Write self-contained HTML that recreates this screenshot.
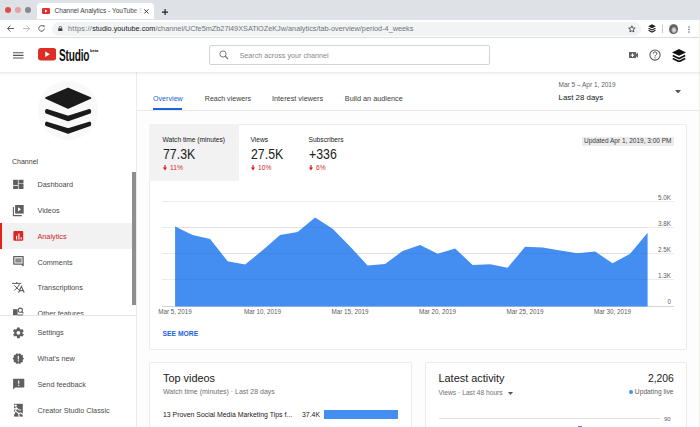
<!DOCTYPE html>
<html><head><meta charset="utf-8">
<style>
*{margin:0;padding:0;box-sizing:border-box}
html,body{width:700px;height:427px;overflow:hidden;background:#fff;font-family:"Liberation Sans",sans-serif;color:#202020}
.a{position:absolute;white-space:nowrap}
#tabbar{position:absolute;left:0;top:0;width:700px;height:19.5px;background:#dee1e6}
.dot{position:absolute;top:6.6px;width:6.2px;height:6.2px;border-radius:50%}
#tab{position:absolute;left:36.6px;top:3.3px;width:117.3px;height:16px;background:#fff;border-radius:4px 4px 0 0}
#addr{position:absolute;left:0;top:19.5px;width:700px;height:18px;background:#fff;border-bottom:1px solid #dadce0}
#omni{position:absolute;left:52px;top:22px;width:589px;height:13.5px;background:#f1f3f4;border-radius:7px}
#ythead{position:absolute;left:0;top:38px;width:700px;height:34px;background:#fff}
#side{position:absolute;left:0;top:72px;width:137px;height:355px;background:#fff;border-right:1px solid #ebebeb}
#main{position:absolute;left:137px;top:72px;width:562px;height:355px;background:#fdfdfd}
#mhead{position:absolute;left:0;top:0;width:562px;height:39px;background:#fff;border-bottom:1px solid #e8e8e8}
.card{position:absolute;background:#fff;border:1px solid #ebebeb;border-radius:2px}
.item{position:absolute;left:0;width:136px;height:26px}
.t{left:37.5px;line-height:10px;font-size:7.25px;color:#4a4a4a}
.item svg{position:absolute;left:12px;top:8px}
.m{font-size:14.5px;line-height:16px;color:#202020;transform:scaleX(.85);transform-origin:0 0}
.shadow{position:absolute;left:0;top:72px;width:700px;height:3.5px;background:linear-gradient(rgba(0,0,0,.085),rgba(0,0,0,.03) 40%,rgba(0,0,0,0));z-index:5}
</style></head><body>
<div id="tabbar">
  <div class="dot" style="left:5.3px;background:#e04a48"></div>
  <div class="dot" style="left:14.9px;background:#e6a09e"></div>
  <div class="dot" style="left:24.9px;background:#878787"></div>
  <div id="tab">
    <svg class="a" style="left:5.5px;top:5px" width="8" height="6" viewBox="0 0 8 6"><rect width="8" height="6" rx="1.3" fill="#e3302f"/><path d="M3 1.6L5.4 3 3 4.4z" fill="#fff"/></svg>
    <div class="a" style="left:18px;top:2px;font-size:6.5px;line-height:12px;color:#3c4043">Channel Analytics - YouTube S</div>
    <div class="a" style="left:96px;top:4px;width:20px;height:10px;background:linear-gradient(90deg,rgba(255,255,255,0),rgba(255,255,255,.85) 45%,#fff 55%)"></div>
    <svg class="a" style="left:107.4px;top:5.6px" width="4.8" height="4.8" viewBox="0 0 4.8 4.8"><path d="M.3.3l4.2 4.2M4.5.3L.3 4.5" stroke="#3c4043" stroke-width="1"/></svg>
  </div>
  <svg class="a" style="left:161.7px;top:8.6px" width="6.2" height="6.2" viewBox="0 0 6.2 6.2"><path d="M3.1 0v6.2M0 3.1h6.2" stroke="#202124" stroke-width="1.15"/></svg>
</div>
<div id="addr">
  <svg class="a" style="left:6px;top:4.5px" width="9" height="9" viewBox="0 0 9 9"><path d="M8 4.5H1.5M4.5 1.5l-3 3 3 3" stroke="#5f6368" stroke-width="1" fill="none"/></svg>
  <svg class="a" style="left:21.5px;top:4.5px" width="9" height="9" viewBox="0 0 9 9"><path d="M1 4.5h6.5M4.5 1.5l3 3-3 3" stroke="#bdc1c6" stroke-width="1" fill="none"/></svg>
  <svg class="a" style="left:37px;top:4.5px" width="9" height="9" viewBox="0 0 9 9"><path d="M7.3 4.5A2.8 2.8 0 1 1 6.5 2.5" stroke="#5f6368" stroke-width="1" fill="none"/><path d="M5.2 1.3h2.3v2.3z" fill="#5f6368"/></svg>
</div>
<div id="omni">
  <svg class="a" style="left:6.4px;top:4.2px" width="4.6" height="5.2" viewBox="0 0 4.6 5.2"><path d="M1.1 2.3V1.5a1.2 1.2 0 0 1 2.4 0v.8" stroke="#3c4043" stroke-width=".8" fill="none"/><rect x=".2" y="2.2" width="4.2" height="3" rx=".4" fill="#3c4043"/></svg>
  <div class="a" style="left:16px;top:0;font-size:7.3px;line-height:13.5px;color:#70757a"><span style="letter-spacing:.28px">https://</span><span style="color:#202124">studio.youtube.com</span>/channel/UCfe5mZb27l49XSATiOZeKJw/analytics/tab-overview/period-4_weeks</div>
  <svg class="a" style="left:576.2px;top:3.2px" width="7.8" height="7.8" viewBox="0 0 24 24"><path d="M12 2.5l2.8 6.6 7.2.6-5.5 4.7 1.7 7L12 17.6l-6.2 3.8 1.7-7L2 9.7l7.2-.6z" stroke="#3c4043" stroke-width="2.6" fill="none" stroke-linejoin="round"/></svg>
</div>
<svg class="a" style="left:647.5px;top:24px" width="8" height="9" viewBox="0 0 8 9"><path d="M4 .3L7.8 2.3 4 4.3 .2 2.3z" fill="#222"/><path d="M.5 4.2L4 6 7.5 4.2M.5 6.3L4 8.1 7.5 6.3" stroke="#222" stroke-width="1.1" fill="none"/></svg>
<div class="a" style="left:662px;top:25px;width:1px;height:8px;background:#c8c8c8"></div>
<div class="a" style="left:668.6px;top:24px;width:9.7px;height:9.5px;border-radius:50%;background:radial-gradient(ellipse at 55% 60%,#eee 0,#bbb 25%,#555 45%,#777 65%,#ddd 100%)"></div>
<svg class="a" style="left:688px;top:25.5px" width="2" height="7" viewBox="0 0 2 7"><circle cx="1" cy="1" r=".8" fill="#5f6368"/><circle cx="1" cy="3.5" r=".8" fill="#5f6368"/><circle cx="1" cy="6" r=".8" fill="#5f6368"/></svg>

<div id="ythead">
  <svg class="a" style="left:13.2px;top:13.5px" width="10.5" height="7" viewBox="0 0 10.5 7"><path d="M0 .8h10.5M0 3.4h10.5M0 6.05h10.5" stroke="#555" stroke-width="1.1"/></svg>
  <svg class="a" style="left:37.6px;top:10.4px" width="18.3" height="12.4" viewBox="0 0 18.5 12.5"><rect width="18.5" height="12.5" rx="3" fill="#dc2d26"/><path d="M7.3 3.5L12 6.25 7.3 9z" fill="#fff"/></svg>
  <div class="a" style="left:58.5px;top:9px;font-size:16.8px;line-height:17px;font-weight:bold;color:#111;transform:scaleX(.6);transform-origin:0 0;letter-spacing:-.3px">Studio</div>
  <div class="a" style="left:90px;top:10px;font-size:4px;line-height:5px;font-weight:bold;color:#000">beta</div>
  <div class="a" style="left:209px;top:7.2px;width:281px;height:19.5px;border:1px solid #d3d3d3;border-radius:2px;background:#fff">
    <svg class="a" style="left:9.2px;top:3.7px" width="10" height="10" viewBox="0 0 10 10"><circle cx="4" cy="4" r="3.1" stroke="#777" stroke-width="1" fill="none"/><path d="M6.2 6.2L9 9" stroke="#777" stroke-width="1.2"/></svg>
    <div class="a" style="left:29.5px;top:.8px;line-height:17.5px;font-size:7.2px;color:#888">Search across your channel</div>
  </div>
  <svg class="a" style="left:628.9px;top:13.7px" width="9.5" height="6.4" viewBox="0 0 9.5 6.4"><path d="M0 0h7.1v2.2L9.4 .3v5.8L7.1 4.2v2.2H0z" fill="#606060"/><path d="M3.5 1.4v3.6M1.7 3.2h3.6" stroke="#fff" stroke-width="1"/></svg>
  <svg class="a" style="left:648.7px;top:11px" width="12" height="12" viewBox="0 0 12 12"><circle cx="6" cy="6" r="5.1" stroke="#555" stroke-width="1.05" fill="none"/><path d="M4.3 4.7a1.75 1.75 0 1 1 2.5 1.5c-.55.3-.8.55-.8 1.3" stroke="#555" stroke-width="1" fill="none"/><circle cx="6" cy="8.8" r=".62" fill="#555"/></svg>
  <svg class="a" style="left:671.5px;top:10.5px" width="14" height="13.5" viewBox="0 0 14 13.5"><path d="M7 0L14 3.4 7 6.8 0 3.4z" fill="#111"/><path d="M.8 6.6L7 9.6 13.2 6.6M.8 9.6L7 12.6 13.2 9.6" stroke="#111" stroke-width="1.7" fill="none"/></svg>
</div>
<div class="shadow"></div>

<div id="side">
  <div class="a" style="left:38px;top:8.5px;width:59.5px;height:59.5px;border-radius:50%;background:#f8f9f8"></div>
  <svg class="a" style="left:43.5px;top:14.5px" width="48" height="50" viewBox="43.5 86.5 48 50"><g fill="#1b1b1b" stroke="#1b1b1b" stroke-width="1.6" stroke-linejoin="round"><path d="M67.6 87.9L90 97.5 67.6 107.6 45.4 97.5z"/><path d="M46.3 109.3L67.6 116 88.9 109.3Q90.4 109.5 89.6 112.2L67.6 120 45.6 112.2Q44.8 109.5 46.3 109.3z"/><path d="M46.3 121.9L67.6 128.6 88.9 121.9Q90.4 122.1 89.6 124.8L67.6 132.6 45.6 124.8Q44.8 122.1 46.3 121.9z"/></g></svg>
  <div class="a" style="left:12px;top:85px;font-size:7px;line-height:10px;color:#404040">Channel</div>
  <div class="a" style="left:0;top:151px;width:132px;height:25.5px;background:#f2f2f2"></div>
  <div class="a" style="left:0;top:151px;width:2px;height:25.5px;background:#e62117"></div>
  <div class="a t" style="top:107.7px">Dashboard</div>
  <div class="a t" style="top:134.2px">Videos</div>
  <div class="a t" style="top:159.6px;color:#cc1f1f">Analytics</div>
  <div class="a t" style="top:186.1px">Comments</div>
  <div class="a t" style="top:210.7px">Transcriptions</div>
  <div class="a" style="left:0;top:228px;width:136px;height:15px;overflow:hidden"><div class="a t" style="top:9px">Other features</div></div>
  <div class="a" style="left:0;top:243px;width:136px;height:1px;background:#e6e6e6"></div>
  <div class="a" style="left:132px;top:99.5px;width:4px;height:133.5px;background:#8e8e8e"></div>
  <div class="a t" style="top:255.7px">Settings</div>
  <div class="a t" style="top:281.7px">What's new</div>
  <div class="a t" style="top:307.7px">Send feedback</div>
  <div class="a t" style="top:333.7px">Creator Studio Classic</div>
  <svg class="a" style="left:0;top:0" width="137" height="355" viewBox="0 72 137 355">
    <g fill="#606060">
      <path d="M13.1 179.7h4.8v5.6h-4.8zM13.1 185.9h4.8v3.1h-4.8zM18.6 179.7h4.9v3.7h-4.9zM18.6 184h4.9v5h-4.9z"/>
      <path d="M15.1 205h8.6v8.6h-8.6z"/>
      <path d="M13.4 207v8.6h8.4" stroke="#606060" stroke-width="1.1" fill="none"/>
    </g>
    <path d="M18 207.2l3 2.1-3 2.1z" fill="#fff"/>
    <rect x="13.4" y="231" width="9.8" height="9.8" rx="1" fill="#dd2424"/>
    <path d="M16.6 235.8v3.6M18.9 233.4v6M21.2 237.2v2.2" stroke="#fff" stroke-width="1.1"/>
    <path d="M13.8 256.6h9.3v8.9l-1.6-1.4h-7.7z" fill="none" stroke="#606060" stroke-width="1.3" stroke-linejoin="round"/>
    <path d="M15.3 258.3h6.3v4.3h-6.3z" fill="#8a8a8a"/>
    <path d="M12.1 283.4h9.2M16.6 282v1.4M14.3 285.5l5.8 5.3M19.3 284.2c-1 2.6-2.8 4.6-5 6.2" stroke="#606060" stroke-width="1" fill="none"/>
    <path d="M18.6 292.7l2.8-6.3 2.8 6.3M19.7 290.6h3.4" stroke="#606060" stroke-width="1.1" fill="none"/>
    <path d="M13 309.2h4.6v6h-4.6z" fill="#606060"/>
    <circle cx="20.3" cy="310.2" r="2.1" stroke="#606060" stroke-width="1.1" fill="none"/>
    <path d="M21.8 311.7l1.6 1.6" stroke="#606060" stroke-width="1.1"/>
    <path d="M17.6 315h5.5" stroke="#606060" stroke-width="1"/>
    <svg x="11.85" y="326.3" width="13.1" height="13.1" viewBox="0 0 24 24"><path fill="#606060" d="M19.4 13c.1-.3.1-.7.1-1s0-.7-.1-1l2.1-1.6c.2-.2.2-.4.1-.6l-2-3.5c-.1-.2-.4-.3-.6-.2l-2.5 1c-.5-.4-1.1-.7-1.7-1l-.4-2.6c0-.3-.2-.5-.5-.5h-4c-.3 0-.5.2-.5.4l-.4 2.7c-.6.2-1.1.6-1.700 1l-2.500-1c-.2-.1-.5 0-.6.2l-2 3.5c-.1.2-.1.5.1.6L4.6 11c0 .3-.1.7-.1 1s0 .7.1 1l-2.1 1.6c-.2.2-.2.4-.1.6l2 3.5c.1.2.4.3.6.2l2.5-1c.5.4 1.1.7 1.7 1l.4 2.7c0 .2.2.4.5.4h4c.3 0 .5-.2.5-.4l.4-2.7c.6-.3 1.2-.6 1.7-1l2.5 1c.2.1.5 0 .6-.2l2-3.5c.1-.2.1-.5-.1-.6L19.4 13zM12 15.5c-1.9 0-3.5-1.600-3.500-3.500s1.6-3.5 3.5-3.5 3.5 1.6 3.5 3.5-1.6 3.5-3.5 3.5z"/></svg>
    <svg x="12.05" y="352.35" width="12.5" height="12.5" viewBox="0 0 24 24"><path fill="#606060" d="M23 12l-2.44-2.78.34-3.68-3.61-.82-1.89-3.18L12 3 8.6 1.54 6.71 4.72l-3.61.81.34 3.68L1 12l2.44 2.78-.34 3.69 3.61.82 1.89 3.18L12 21l3.4 1.46 1.89-3.18 3.61-.82-.34-3.68z"/><path d="M10.9 6.5h2.2v7h-2.2zM10.9 15.4h2.2v2.2h-2.2z" fill="#fff"/></svg>
    <path d="M13.6 378.8h10.2c.3 0 .5.2.5.5v7.8c0 .3-.2.5-.5.5H15.3l-2.2 2v-10.3c0-.3.2-.5.5-.5z" fill="#606060"/>
    <path d="M18.7 380.5v3.3M18.7 384.8v1.2" stroke="#fff" stroke-width="1.1"/>
    <path d="M14 403.8h8.8v12.8H14z" fill="#606060"/>
    <circle cx="15.6" cy="405.6" r="1.2" fill="#fff"/>
    <path d="M14.2 409.2l2.2-1.6 2.2 2.2 2 .2M16.6 408.6l-1.8 3.6-1.2 2.6M16.4 411.6l2.2 1.8.6 3M18.6 413.4l2.6-.4 1.6 1.6" stroke="#fff" stroke-width="1.1" fill="none" stroke-linecap="round"/>
  </svg>
</div>

<div id="main">
  <div id="mhead">
    <div class="a" style="left:16px;top:20.8px;font-size:7.15px;line-height:12px;color:#1a62d8">Overview</div>
    <div class="a" style="left:16px;top:36px;width:29.3px;height:2px;background:#1a62d8"></div>
    <div class="a" style="left:67.8px;top:20.8px;font-size:7.05px;line-height:12px;color:#404040">Reach viewers</div>
    <div class="a" style="left:135px;top:20.8px;font-size:7.3px;line-height:12px;color:#404040">Interest viewers</div>
    <div class="a" style="left:207.8px;top:20.8px;font-size:7.3px;line-height:12px;color:#404040">Build an audience</div>
    <div class="a" style="left:421.5px;top:8px;font-size:6.5px;line-height:10px;color:#606060">Mar 5 – Apr 1, 2019</div>
    <div class="a" style="left:421.5px;top:19.5px;font-size:7.9px;line-height:12px;color:#202020">Last 28 days</div>
    <svg class="a" style="left:538px;top:17.5px" width="6" height="3.5" viewBox="0 0 6 3.5"><path d="M0 0h6L3 3.5z" fill="#555"/></svg>
  </div>
  <div class="card" style="left:12px;top:52px;width:538px;height:225.5px">
    <div class="a" style="left:-1px;top:-1px;width:89.5px;height:56.5px;background:#f2f2f2;border-radius:2px 0 0 0"></div>
    <div class="a" style="left:12.5px;top:9.6px;font-size:6.65px;line-height:10px;color:#202020">Watch time (minutes)</div>
    <div class="a m" style="left:12.5px;top:21px">77.3K</div>
    <svg class="a" style="left:12.9px;top:40.3px" width="4" height="5.5" viewBox="0 0 4 5.5"><path d="M2 0v3" stroke="#d81b1b" stroke-width="1.2"/><path d="M0 2.5h4L2 5.4z" fill="#d81b1b"/></svg>
    <div class="a" style="left:20px;top:37.7px;font-size:6.7px;line-height:10px;color:#d42a2a">11%</div>
    <div class="a" style="left:100.5px;top:9.6px;font-size:6.65px;line-height:10px;color:#202020">Views</div>
    <div class="a m" style="left:100.5px;top:21px">27.5K</div>
    <svg class="a" style="left:100.9px;top:40.3px" width="4" height="5.5" viewBox="0 0 4 5.5"><path d="M2 0v3" stroke="#d81b1b" stroke-width="1.2"/><path d="M0 2.5h4L2 5.4z" fill="#d81b1b"/></svg>
    <div class="a" style="left:108px;top:37.7px;font-size:6.7px;line-height:10px;color:#d42a2a">10%</div>
    <div class="a" style="left:158.5px;top:9.6px;font-size:6.65px;line-height:10px;color:#202020">Subscribers</div>
    <div class="a m" style="left:158.5px;top:21px">+336</div>
    <svg class="a" style="left:158.9px;top:40.3px" width="4" height="5.5" viewBox="0 0 4 5.5"><path d="M2 0v3" stroke="#d81b1b" stroke-width="1.2"/><path d="M0 2.5h4L2 5.4z" fill="#d81b1b"/></svg>
    <div class="a" style="left:166px;top:37.7px;font-size:6.7px;line-height:10px;color:#d42a2a">6%</div>
    <div class="a" style="left:432px;top:12px;width:91.5px;height:8.5px;background:#ececec;font-size:6.5px;line-height:8.5px;color:#383838;text-align:center">Updated Apr 1, 2019, 3:00 PM</div>
    <div class="a" style="left:12.5px;top:203px;font-size:6.75px;line-height:12px;font-weight:bold;color:#1a62d8">SEE MORE</div>
  </div>
  <svg class="a" style="left:0;top:0" width="562" height="355" viewBox="137 72 562 355">
    <g stroke="#ebebeb" stroke-width="1">
      <path d="M162 201.5H674M162 227.5H674M162 253.5H674M162 279.5H674"/>
    </g>
    <path d="M162 306.5H674" stroke="#d4d4d4" stroke-width="1"/>
    <path fill="#438ef0" d="M175.1 306.5V226.5L192.6 235L210.1 238.9L227.6 261.3L245.1 264.5L262.6 250.3L280.1 234.9L297.6 231.9L315.1 217.4L332.6 228.7L350.1 246.5L367.6 265.6L385.1 264L402.6 251L420.1 245.1L437.6 253.8L455.1 248.4L472.6 265.1L490.1 264.3L507.6 267.8L525.1 246.8L542.6 247.6L560.1 250.5L577.6 253.2L595.1 251.6L612.6 263.2L630.1 253.8L647.6 232.7V306.5Z"/>
    <g stroke="rgba(0,0,0,.045)" stroke-width="1"><path d="M175 227.5H648M175 253.5H648M175 279.5H648"/></g>
    <g font-size="6.3" fill="#606060" font-family="Liberation Sans">
      <text x="175" y="314.2" text-anchor="middle">Mar 5, 2019</text>
      <text x="262.5" y="314.2" text-anchor="middle">Mar 10, 2019</text>
      <text x="350" y="314.2" text-anchor="middle">Mar 15, 2019</text>
      <text x="437.5" y="314.2" text-anchor="middle">Mar 20, 2019</text>
      <text x="525" y="314.2" text-anchor="middle">Mar 25, 2019</text>
      <text x="612.5" y="314.2" text-anchor="middle">Mar 30, 2019</text>
      <text x="671" y="199.5" text-anchor="end">5.0K</text>
      <text x="671" y="225.5" text-anchor="end">3.8K</text>
      <text x="671" y="251.5" text-anchor="end">2.5K</text>
      <text x="671" y="277.5" text-anchor="end">1.3K</text>
      <text x="671" y="304" text-anchor="end">0</text>
    </g>
  </svg>
  <div class="card" style="left:12px;top:290px;width:262.5px;height:80px">
    <div class="a" style="left:13px;top:8px;font-size:10.9px;line-height:14px;color:#202020">Top videos</div>
    <div class="a" style="left:13px;top:24px;font-size:7px;line-height:10px;color:#707070">Watch time (minutes) · Last 28 days</div>
    <div class="a" style="left:13px;top:46.5px;font-size:6.9px;line-height:10px;color:#202020">13 Proven Social Media Marketing Tips f...</div>
    <div class="a" style="left:152px;top:46.5px;font-size:6.9px;line-height:10px;color:#202020">37.4K</div>
    <div class="a" style="left:174px;top:46.9px;width:74px;height:9.6px;background:#438ef0"></div>
  </div>
  <div class="card" style="left:287.5px;top:290px;width:262.5px;height:80px">
    <div class="a" style="left:13px;top:8px;font-size:10.9px;line-height:14px;color:#202020">Latest activity</div>
    <div class="a" style="left:13px;top:24.5px;font-size:6.7px;line-height:10px;color:#707070">Views · Last 48 hours</div>
    <svg class="a" style="left:82.5px;top:28.5px" width="5" height="3" viewBox="0 0 5 3"><path d="M0 0h5L2.5 3z" fill="#555"/></svg>
    <div class="a" style="right:12.5px;top:7.5px;font-size:11.5px;line-height:14px;color:#202020;transform:scaleX(.9);transform-origin:100% 0">2,206</div>
    <div class="a" style="right:12.5px;top:23.5px;font-size:6.7px;line-height:10px;color:#606060"><span style="display:inline-block;width:4px;height:4px;border-radius:50%;background:#438ef0;margin-right:2px;vertical-align:0"></span>Updating live</div>
    <div class="a" style="left:13px;top:55px;width:221px;height:1px;background:#e0e0e0"></div>
    <div class="a" style="left:238.5px;top:51.5px;font-size:6px;line-height:8px;color:#606060">90</div>
    <div class="a" style="left:152px;top:62.5px;width:4px;height:4px;background:#438ef0"></div>
  </div>
</div>
<div class="a" style="left:699px;top:20px;width:1px;height:407px;background:#f0f0dc"></div>
</body></html>
